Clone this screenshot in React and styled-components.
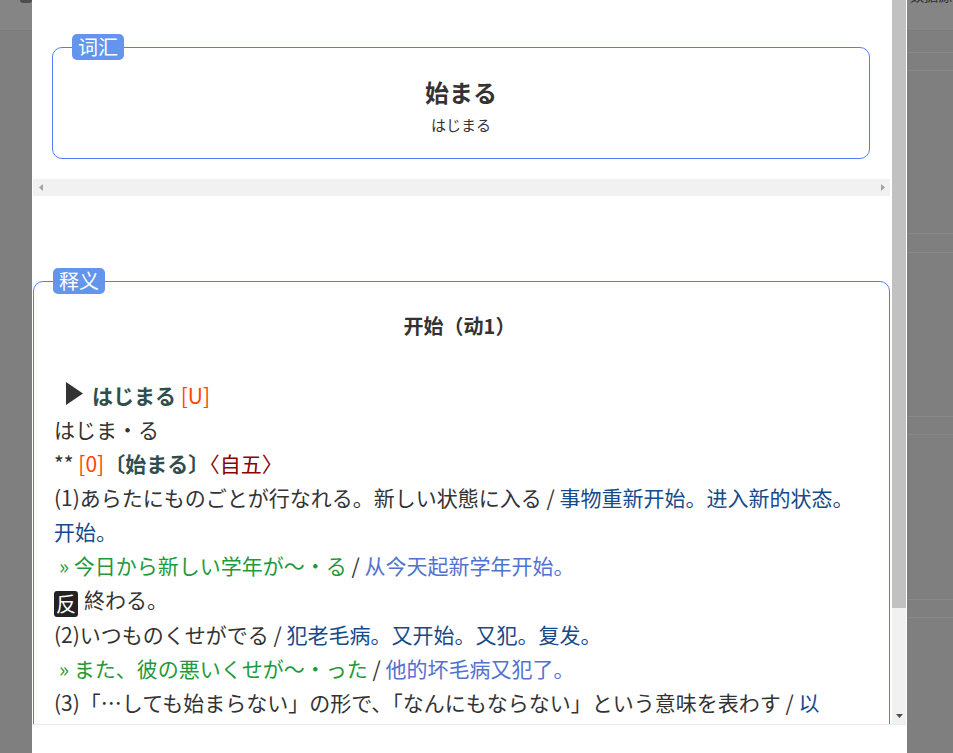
import React from 'react';
import styled, { createGlobalStyle } from 'styled-components';

const GlobalStyle = createGlobalStyle`
  html, body { margin: 0; padding: 0; background: #7f7f7f; overflow: hidden; }
  body { font-family: "Noto Sans CJK SC", "Noto Sans", sans-serif; }
  * { box-sizing: border-box; }
`;

const Screen = styled.div`
  display: flex;
  width: 953px;
  height: 753px;
  overflow: hidden;
  background: #7f7f7f;
`;

const SideStrip = styled.div`
  flex: none;
  width: ${(p) => p.$w}px;
  display: flex;
  flex-direction: column;
  overflow: hidden;
`;

const DimHeader = styled.div`
  height: 31px;
  flex: none;
  display: flex;
  align-items: flex-start;
  overflow: hidden;
  background: #858585;
  border-bottom: 1px solid #7a7a7a;
`;

const DimTab = styled.div`
  margin-left: 20px;
  width: 14px;
  height: 3px;
  background: #4d4d4d;
  border-radius: 0 0 3px 3px;
`;

const DimText = styled.div`
  margin-top: -13px;
  padding-left: 3px;
  font-size: 14px;
  line-height: 16px;
  white-space: nowrap;
  color: #2e2e2e;
`;

const DimRow = styled.div`
  flex: none;
  height: ${(p) => p.$h}px;
  border-bottom: 1px solid #888888;
`;

const Modal = styled.div`
  flex: none;
  width: 875px;
  height: 753px;
  background: #fff;
  display: flex;
  flex-direction: column;
`;

const Viewport = styled.div`
  flex: none;
  height: 725px;
  display: flex;
  border-bottom: 1px solid #ececec;
`;

const Content = styled.div`
  flex: 1;
  min-width: 0;
  overflow: hidden;
  padding-left: 1px;
`;

const VScroll = styled.div`
  flex: none;
  width: 14px;
  margin-right: 1px;
  background: #f1f1f1;
  display: flex;
  flex-direction: column;
`;

const VThumb = styled.div`
  height: 608px;
  background: #c1c1c1;
`;

const VTrack = styled.div`
  flex: 1;
`;

const ArrowBtn = styled.div`
  flex: none;
  width: ${(p) => p.$w || 15}px;
  height: 17px;
  display: flex;
  align-items: center;
  justify-content: center;
`;

const WordSection = styled.div`
  padding: 47px 22px 20px 19px;
`;

const HScroll = styled.div`
  height: 17px;
  margin-right: 2px;
  background: #f1f1f1;
  display: flex;
  justify-content: space-between;
`;

const Panel = styled.div`
  position: relative;
  border: 1px solid #4f7ff2;
  border-radius: 10px;
  margin: ${(p) => p.$margin || '0'};
  padding: ${(p) => p.$padding};
  color: #333;
`;

const Legend = styled.span`
  position: absolute;
  top: -14px;
  left: 19px;
  height: 26px;
  padding: 0 6px;
  line-height: 26px;
  font-size: 20px;
  color: #fff;
  background: #6495ed;
  border-radius: 5px;
`;

const WordTitle = styled.div`
  font-size: 24px;
  font-weight: 700;
  line-height: 32px;
  text-align: center;
  color: #333;
`;

const WordReading = styled.div`
  margin-top: 6px;
  font-size: 15px;
  line-height: 22px;
  text-align: center;
  color: #333;
`;

const SenseTitle = styled.div`
  font-size: 20px;
  font-weight: 700;
  line-height: 30px;
  text-align: center;
  margin: 0 -8px 37px 0;
  color: #333;
`;

const Line = styled.div`
  font-size: 21px;
  line-height: 34px;
  color: #333;
  padding-left: ${(p) => p.$indent || 0}px;
`;

const Marker = styled.svg`
  margin-left: 12px;
  margin-right: 9px;
  vertical-align: -1px;
`;

const Head = styled.span`
  font-weight: 700;
  color: #2f4f4f;
`;

const Accent = styled.span`
  color: #ff4500;
`;

const Pos = styled.span`
  color: #8b0000;
`;

const Zh = styled.span`
  color: #164a8a;
`;

const ExJa = styled.span`
  color: #1f9a3a;
`;

const ExZh = styled.span`
  color: #5272cf;
`;

const AntBadge = styled.span`
  display: inline-block;
  width: 24px;
  height: 26px;
  margin-right: 6px;
  font-size: 20px;
  line-height: 26px;
  text-align: center;
  vertical-align: -4px;
  background: #222;
  color: #fff;
  border-radius: 3px;
`;

const Tri = ({ dir, color }) => {
  const pts = {
    left: '4,0 0,3.5 4,7',
    right: '0,0 4,3.5 0,7',
    down: '0,0 7,0 3.5,4',
  }[dir];
  const w = dir === 'down' ? 7 : 4;
  const h = dir === 'down' ? 4 : 7;
  return (
    <svg width={w} height={h} viewBox={`0 0 ${w} ${h}`}>
      <polygon points={pts} fill={color} />
    </svg>
  );
};

const rightRows = [22, 18, 163, 19, 164, 18, 165, 18, 200];

export default function App() {
  return (
    <>
      <GlobalStyle />
      <Screen>
        <SideStrip $w={32}>
          <DimHeader>
            <DimTab />
          </DimHeader>
        </SideStrip>

        <Modal>
          <Viewport>
            <Content>
              <WordSection>
                <Panel $padding="28px 0 22px">
                  <Legend>词汇</Legend>
                  <WordTitle>始まる</WordTitle>
                  <WordReading>はじまる</WordReading>
                </Panel>
              </WordSection>
              <HScroll>
                <ArrowBtn>
                  <Tri dir="left" color="#a3a3a3" />
                </ArrowBtn>
                <ArrowBtn>
                  <Tri dir="right" color="#a3a3a3" />
                </ArrowBtn>
              </HScroll>

              <Panel $margin="85px 2px 0 0" $padding="29px 32px 0 20px">
                <Legend>释义</Legend>
                <SenseTitle>开始（动1）</SenseTitle>
                <Line>
                  <Marker width="17" height="23" viewBox="0 0 17 23">
                    <polygon points="0,0 17,11.5 0,23" fill="#333" />
                  </Marker>
                  <Head>はじまる</Head> <Accent>[U]</Accent>
                </Line>
                <Line>はじま・る</Line>
                <Line>
                  ** <Accent>[0]</Accent>
                  <Head>〔始まる〕</Head>
                  <Pos>〈自五〉</Pos>
                </Line>
                <Line>
                  (1)あらたにものごとが行なれる。新しい状態に入る /{' '}
                  <Zh>事物重新开始。进入新的状态。开始。</Zh>
                </Line>
                <Line $indent={5}>
                  <ExJa>» 今日から新しい学年が〜・る</ExJa> /{' '}
                  <ExZh>从今天起新学年开始。</ExZh>
                </Line>
                <Line>
                  <AntBadge>反</AntBadge>終わる。
                </Line>
                <Line>
                  (2)いつものくせがでる / <Zh>犯老毛病。又开始。又犯。复发。</Zh>
                </Line>
                <Line $indent={5}>
                  <ExJa>» また、彼の悪いくせが〜・った</ExJa> /{' '}
                  <ExZh>他的坏毛病又犯了。</ExZh>
                </Line>
                <Line>
                  (3)「…しても始まらない」の形で、「なんにもならない」という意味を表わす /{' '}
                  <Zh>以「…也无济于事」的形式，表示「毫无用处」的意思。</Zh>
                </Line>
              </Panel>
            </Content>
            <VScroll>
              <VThumb />
              <VTrack />
              <ArrowBtn $w={14}>
                <Tri dir="down" color="#505050" />
              </ArrowBtn>
            </VScroll>
          </Viewport>
        </Modal>

        <SideStrip $w={46}>
          <DimHeader>
            <DimText>数据源</DimText>
          </DimHeader>
          {rightRows.map((h, i) => (
            <DimRow key={i} $h={h} />
          ))}
        </SideStrip>
      </Screen>
    </>
  );
}
